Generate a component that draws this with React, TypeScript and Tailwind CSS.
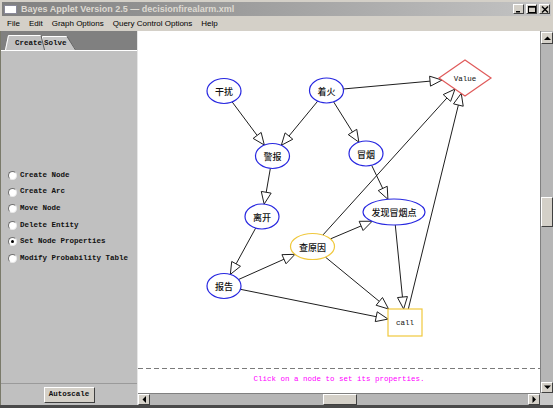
import React from 'react'

type Shape = 'ellipse' | 'rect' | 'diamond'

type GraphNode = {
    x: number
    y: number
    label: string
    shape: Shape
    rx: number
    ry: number
    color: string
}

const BLUE = '#2727e0'
const YELLOW = '#f0c83c'
const RED = '#e05a5a'

const nodes: Record<string, GraphNode> = {
    gr: { x: 224, y: 91, label: '干扰', shape: 'ellipse', rx: 17, ry: 12.5, color: BLUE },
    zh: { x: 326.5, y: 90.5, label: '着火', shape: 'ellipse', rx: 17, ry: 12.5, color: BLUE },
    jb: { x: 272.5, y: 156, label: '警报', shape: 'ellipse', rx: 17, ry: 12.5, color: BLUE },
    my: { x: 366, y: 153.5, label: '冒烟', shape: 'ellipse', rx: 17, ry: 12.5, color: BLUE },
    lk: { x: 262, y: 216.5, label: '离开', shape: 'ellipse', rx: 17, ry: 12.5, color: BLUE },
    fx: { x: 394, y: 212, label: '发现冒烟点', shape: 'ellipse', rx: 31, ry: 13, color: BLUE },
    cy: { x: 312.5, y: 246.5, label: '查原因', shape: 'ellipse', rx: 22, ry: 13, color: YELLOW },
    bg: { x: 224, y: 286, label: '报告', shape: 'ellipse', rx: 17, ry: 12.5, color: BLUE },
    call: { x: 405, y: 322.5, label: 'call', shape: 'rect', rx: 17, ry: 13.5, color: YELLOW },
    value: { x: 465, y: 78, label: 'Value', shape: 'diamond', rx: 26, ry: 18, color: RED },
}

const edges: [string, string][] = [
    ['gr', 'jb'], ['zh', 'jb'], ['zh', 'my'], ['zh', 'value'],
    ['my', 'fx'], ['jb', 'lk'], ['lk', 'bg'], ['bg', 'cy'],
    ['bg', 'call'], ['cy', 'fx'], ['cy', 'call'], ['cy', 'value'],
    ['fx', 'call'], ['call', 'value'],
]

// scale factor from node center to its outline along vector (vx, vy)
function edgeScale(n: GraphNode, vx: number, vy: number) {
    const ax = Math.abs(vx), ay = Math.abs(vy)
    if (n.shape === 'rect') return Math.min(ax ? n.rx / ax : Infinity, ay ? n.ry / ay : Infinity)
    if (n.shape === 'diamond') return 1 / (ax / n.rx + ay / n.ry)
    return 1 / Math.sqrt((vx / n.rx) ** 2 + (vy / n.ry) ** 2)
}

function Edge({ from, to }: { from: GraphNode, to: GraphNode }) {
    const vx = to.x - from.x, vy = to.y - from.y
    const s1 = edgeScale(from, vx, vy)
    const s2 = edgeScale(to, -vx, -vy)
    const sx = from.x + vx * s1, sy = from.y + vy * s1
    const ex = to.x - vx * s2, ey = to.y - vy * s2
    const len = Math.hypot(vx, vy)
    const ux = vx / len, uy = vy / len
    const bx = ex - ux * 12, by = ey - uy * 12
    const nx = -uy * 5, ny = ux * 5
    return (
        <g>
            <line x1={sx} y1={sy} x2={bx} y2={by} stroke="#1e1e1e" strokeWidth={1} />
            <polygon points={`${ex},${ey} ${bx + nx},${by + ny} ${bx - nx},${by - ny}`} fill="#fff" stroke="#1e1e1e" strokeWidth={1} />
        </g>
    )
}

function NodeShape({ n }: { n: GraphNode }) {
    const latin = n.shape !== 'ellipse'
    return (
        <g>
            {n.shape === 'ellipse' && <ellipse cx={n.x} cy={n.y} rx={n.rx} ry={n.ry} fill="#fff" stroke={n.color} strokeWidth={1.2} />}
            {n.shape === 'rect' && <rect x={n.x - n.rx} y={n.y - n.ry} width={n.rx * 2} height={n.ry * 2} fill="#fff" stroke={n.color} strokeWidth={1.2} />}
            {n.shape === 'diamond' && (
                <polygon
                    points={`${n.x - n.rx},${n.y} ${n.x},${n.y - n.ry} ${n.x + n.rx},${n.y} ${n.x},${n.y + n.ry}`}
                    fill="#fff" stroke={n.color} strokeWidth={1.2}
                />
            )}
            <text
                x={n.x} y={n.y + 0.5}
                textAnchor="middle" dominantBaseline="central"
                fontSize={latin ? 7.5 : 9}
                fontWeight={latin ? 400 : 500}
                fontFamily={latin ? "'Liberation Mono', monospace" : "'Noto Sans CJK SC', sans-serif"}
                fill="#111"
            >
                {n.label}
            </text>
        </g>
    )
}

function Arrow({ dir }: { dir: 'up' | 'down' | 'left' | 'right' }) {
    const pts = {
        up: '0,4 3.5,0.5 7,4',
        down: '0,0.5 3.5,4 7,0.5',
        left: '4,0 0.5,3.5 4,7',
        right: '0.5,0 4,3.5 0.5,7',
    }[dir]
    const w = dir === 'up' || dir === 'down' ? 7 : 4.5
    const h = dir === 'up' || dir === 'down' ? 4.5 : 7
    return (
        <svg width={w} height={h} viewBox={`0 0 ${w} ${h}`}>
            <polygon points={pts} fill="#000" />
        </svg>
    )
}

function ScrollButton({ dir, className }: { dir: 'up' | 'down' | 'left' | 'right', className: string }) {
    return (
        <div className={`${className} flex items-center justify-center bg-[#d4d0c8] border-t border-l border-t-white border-l-white border-b border-r border-b-[#404040] border-r-[#404040]`}>
            <Arrow dir={dir} />
        </div>
    )
}

function Radio({ label, checked }: { label: string, checked?: boolean }) {
    return (
        <div className="h-[16.6px] flex items-center pl-[7px]">
            <div className="w-[9px] h-[9px] rounded-full bg-white border border-t-[#707070] border-l-[#707070] border-b-[#e8e8e8] border-r-[#e8e8e8] flex items-center justify-center">
                {checked && <div className="w-[3px] h-[3px] rounded-full bg-black" />}
            </div>
            <span className="ml-[3px] text-[7.5px] font-bold text-[#111] font-['Liberation_Mono',monospace] leading-none">{label}</span>
        </div>
    )
}

function WinButton({ kind }: { kind: 'min' | 'max' | 'close' }) {
    return (
        <div className="w-[11px] h-[10px] bg-[#d4d0c8] border-t border-l border-t-white border-l-white border-b border-r border-b-[#404040] border-r-[#404040] flex items-center justify-center">
            <svg width="8" height="7" viewBox="0 0 8 7">
                {kind === 'min' && <rect x="1" y="5" width="4" height="1.5" fill="#000" />}
                {kind === 'max' && (
                    <g fill="none" stroke="#000" strokeWidth="1">
                        <rect x="0.5" y="0.5" width="7" height="6" />
                        <line x1="0.5" y1="1.2" x2="7.5" y2="1.2" />
                    </g>
                )}
                {kind === 'close' && (
                    <g stroke="#000" strokeWidth="1.4">
                        <line x1="1" y1="0.5" x2="7" y2="6.5" />
                        <line x1="7" y1="0.5" x2="1" y2="6.5" />
                    </g>
                )}
            </svg>
        </div>
    )
}

export default function App() {
    return (
        <div className="w-[553px] h-[408px] overflow-hidden bg-[#d4d0c8] flex flex-col font-['Liberation_Sans',sans-serif]">
            {/* Title bar */}
            <div className="pt-[2px] px-[2px]">
                <div className="h-[14px] bg-linear-to-r from-[#808080] to-[#c4c4c4] flex items-center pl-[2px] pr-[1px]">
                    <div className="w-[13px] h-[9px] bg-white border border-[#8a8a9a]" />
                    <span className="ml-[4px] text-[9px] font-bold text-[#dedad2] leading-none whitespace-nowrap">
                        Bayes Applet Version 2.5 — decisionfirealarm.xml
                    </span>
                    <div className="ml-auto flex items-center">
                        <WinButton kind="min" />
                        <div className="ml-[2px]"><WinButton kind="max" /></div>
                        <div className="ml-[2px]"><WinButton kind="close" /></div>
                    </div>
                </div>
            </div>

            {/* Menu bar */}
            <div className="h-[15px] flex items-center pl-[7px] gap-[9px] text-[8px] text-black leading-none">
                <span>File</span>
                <span>Edit</span>
                <span>Graph Options</span>
                <span>Query Control Options</span>
                <span>Help</span>
            </div>

            {/* Main area */}
            <div className="h-[374px] flex">
                {/* Left control panel */}
                <div className="w-[138px] flex flex-col bg-[#c0c0c0] border-r border-[#e6e6e6] border-l border-l-[#7a7a6a]">
                    <div className="h-[19px] bg-[#808080] flex items-end pl-[4px]">
                        <div className="relative z-10 w-[40px] h-[15px]">
                            <svg className="absolute inset-0" width="40" height="15" viewBox="0 0 40 15">
                                <polygon points="3,0.5 36,0.5 40,15 0,15" fill="#c0c0c0" />
                                <polyline points="0.5,15 3.5,0.5 36,0.5" fill="none" stroke="#fff" strokeWidth="1" />
                                <line x1="36" y1="0.5" x2="39.5" y2="15" stroke="#606060" strokeWidth="1" />
                            </svg>
                            <span className="relative block pl-[10px] pt-[5px] text-[7.5px] font-bold text-[#111] font-['Liberation_Mono',monospace] leading-none">Create</span>
                        </div>
                        <div className="relative -ml-[5px] w-[36px] h-[14px]">
                            <svg className="absolute inset-0" width="36" height="14" viewBox="0 0 36 14">
                                <polygon points="2,0.5 27,0.5 36,14 0,14" fill="#c6c6c6" />
                                <polyline points="0.5,14 2.5,0.5 27,0.5" fill="none" stroke="#fff" strokeWidth="1" />
                                <line x1="27" y1="0.5" x2="35.5" y2="14" stroke="#606060" strokeWidth="1" />
                            </svg>
                            <span className="relative block pl-[4px] pt-[4px] text-[7.5px] font-bold text-[#111] font-['Liberation_Mono',monospace] leading-none">Solve</span>
                        </div>
                    </div>
                    <div className="flex-1 border-t border-white flex flex-col justify-center">
                        <Radio label="Create Node" />
                        <Radio label="Create Arc" />
                        <Radio label="Move Node" />
                        <Radio label="Delete Entity" />
                        <Radio label="Set Node Properties" checked />
                        <Radio label="Modify Probability Table" />
                    </div>
                    <div className="h-[22px] border-t border-[#9a9a9a] flex items-center justify-center">
                        <button className="w-[51px] h-[16px] bg-[#d4d0c8] border-t border-l border-t-white border-l-white border-b border-r border-b-[#404040] border-r-[#404040] text-[7.5px] font-bold text-[#111] font-['Liberation_Mono',monospace] leading-none">
                            Autoscale
                        </button>
                    </div>
                </div>

                {/* Canvas + scrollbars */}
                <div className="w-[415px] flex flex-col">
                    <div className="h-[362px] flex">
                        <div className="w-[402px] bg-white flex flex-col">
                            <svg width="402" height="337" viewBox="138 31 402 337" className="block">
                                {edges.map(([a, b]) => <Edge key={a + b} from={nodes[a]} to={nodes[b]} />)}
                                {Object.entries(nodes).map(([k, n]) => <NodeShape key={k} n={n} />)}
                            </svg>
                            <div className="h-px bg-[repeating-linear-gradient(to_right,#7a7a7a_0_5px,transparent_5px_8px)]" />
                            <div className="flex-1 flex items-center justify-center pb-[2px]">
                                <span className="text-[7.5px] text-[#ff00ff] font-['Liberation_Mono',monospace] leading-none">
                                    Click on a node to set its properties.
                                </span>
                            </div>
                        </div>
                        <div className="w-[13px] flex flex-col bg-[#b6b6b6] border-l border-[#808080]">
                            <ScrollButton dir="up" className="h-[12px] mt-[1px]" />
                            <div className="h-[153px]" />
                            <div className="h-[30px] bg-[#d4d0c8] border-t border-l border-t-white border-l-white border-b border-r border-b-[#404040] border-r-[#404040]" />
                            <div className="flex-1" />
                            <ScrollButton dir="down" className="h-[11px]" />
                        </div>
                    </div>
                    <div className="h-[12px] flex">
                        <div className="w-[402px] flex bg-[#b6b6b6] border-t border-[#808080]">
                            <ScrollButton dir="left" className="w-[12px]" />
                            <div className="w-[173px]" />
                            <div className="w-[34px] bg-[#d4d0c8] border-t border-l border-t-white border-l-white border-b border-r border-b-[#404040] border-r-[#404040]" />
                            <div className="flex-1" />
                            <ScrollButton dir="right" className="w-[12px]" />
                        </div>
                        <div className="w-[13px] bg-[#c8c8c8]" />
                    </div>
                </div>
            </div>

            <div className="flex-1 bg-[#4a4a4a]" />
        </div>
    )
}
